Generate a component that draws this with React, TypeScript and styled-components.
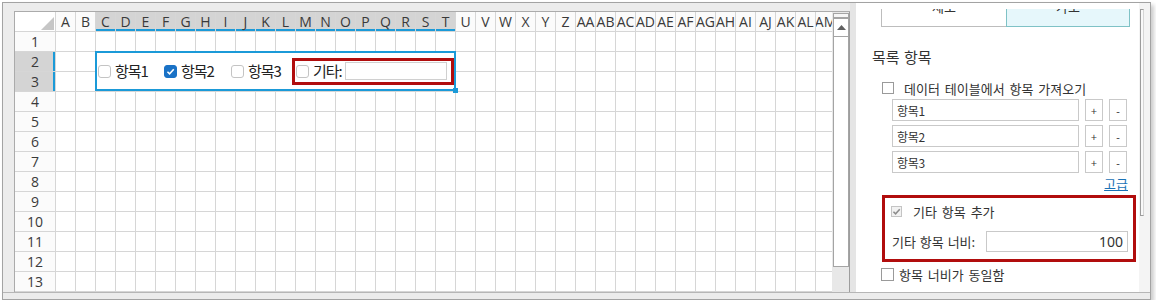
import React from 'react'
import styled, { createGlobalStyle } from 'styled-components'

const KR = `"Noto Sans CJK KR", "Noto Sans", sans-serif`
const LATIN = `"Open Sans", "Noto Sans CJK KR", sans-serif`
const GRID = '#d6d6d6'
const BLUE = '#1b9ad8'
const RED = '#b10d0d'

const GlobalStyle = createGlobalStyle`
  html, body {
    margin: 0;
    padding: 0;
    background: #fff;
  }
  body {
    font-family: ${LATIN};
  }
`

const COLUMNS = [
  ...'ABCDEFGHIJKLMNOPQRSTUVWXYZ'.split(''),
  ...'ABCDEFGHIJKLM'.split('').map(c => 'A' + c),
]
const ROWS = Array.from({ length: 13 }, (_, i) => i + 1)
const SEL_COLS = 'CDEFGHIJKLMNOPQRST'.split('')

// --- window frame ---
const Frame = styled.div`
  margin: 2px 0 0 2px;
  width: 1149px;
  height: 298px;
  box-sizing: border-box;
  border: 1px solid #a3a3a3;
  background: #ececec;
  box-shadow: 3px 3px 4px rgba(0, 0, 0, 0.2);
  display: flex;
  flex-direction: column;
`

const Main = styled.div`
  display: flex;
  height: 290px;
  box-sizing: border-box;
  border-bottom: 1px solid #b6b6b6;
`

const Footer = styled.div`
  height: 6px;
  background: #ececec;
`

// --- spreadsheet ---
const SheetPane = styled.div`
  width: 847px;
  box-sizing: border-box;
  padding: 8px 0 0 11px;
  background: #ececec;
`

const GridFrame = styled.div`
  display: flex;
  height: 281px;
  box-sizing: border-box;
  border-left: 1px solid #ababab;
  border-top: 1px solid #ababab;
`

const Viewport = styled.div`
  position: relative;
  width: 817px;
  overflow: hidden;
  background: #fff;
`

const Grid = styled.div`
  display: grid;
  grid-template-columns: 41px repeat(${COLUMNS.length}, 20px);
  grid-auto-rows: 20px;
  width: max-content;
`

const Cell = styled.div`
  box-sizing: border-box;
  border-right: 1px solid ${GRID};
  border-bottom: 1px solid ${GRID};
  background: #fff;
`

const Corner = styled(Cell)`
  display: flex;
  align-items: flex-end;
  justify-content: flex-end;
  padding: 0 1px 1px 0;
`

const ColHead = styled(Cell)<{ $sel?: boolean }>`
  display: flex;
  align-items: center;
  justify-content: center;
  overflow: hidden;
  white-space: nowrap;
  font-size: 14px;
  color: #3a3a3a;
  background: ${p => (p.$sel ? '#d4d4d4' : '#fbfbfb')};
  box-shadow: ${p => (p.$sel ? `inset 0 -2px 0 ${BLUE}` : 'none')};
`

const RowHead = styled(Cell)<{ $sel?: boolean }>`
  display: flex;
  align-items: center;
  justify-content: center;
  font-size: 14px;
  color: #3a3a3a;
  background: ${p => (p.$sel ? '#d4d4d4' : '#fbfbfb')};
  box-shadow: ${p => (p.$sel ? `inset -2px 0 0 ${BLUE}` : 'none')};
`

const VScroll = styled.div`
  width: 18px;
  box-sizing: border-box;
  border-right: 1px solid #9d9d9d;
  background: #e8e8e8;
  display: flex;
  flex-direction: column;
  padding: 1px 0 0 1px;
`

const Splitter = styled.div`
  width: 16px;
  height: 5px;
  box-sizing: border-box;
  border: 1px solid #a4a4a4;
  background: #f6f6f6;
`

const ArrowBtn = styled.div`
  width: 16px;
  height: 19px;
  box-sizing: border-box;
  border: 1px solid #a4a4a4;
  background: #fff;
  display: flex;
  align-items: center;
  justify-content: center;
`

const Thumb = styled.div`
  width: 16px;
  height: 231px;
  margin-top: -1px;
  box-sizing: border-box;
  border: 1px solid #a4a4a4;
  background: #fff;
`

// --- checkbox group control placed on the sheet ---
const Control = styled.div`
  position: absolute;
  left: 80px;
  top: 39px;
  width: 361px;
  height: 40px;
  box-sizing: border-box;
  border: 2px solid ${BLUE};
  background: #fff;
  display: flex;
  align-items: center;
  padding-left: 1px;
  font-family: ${KR};
  font-size: 15px;
  letter-spacing: -1px;
  color: #222;
`

const Handle = styled.div`
  position: absolute;
  right: -4px;
  bottom: -4px;
  width: 5px;
  height: 5px;
  background: ${BLUE};
`

const CheckItem = styled.div<{ $w: number }>`
  display: flex;
  align-items: center;
  width: ${p => p.$w}px;
  flex: none;
`

const SheetBox = styled.span<{ $on?: boolean }>`
  width: 13px;
  height: 13px;
  box-sizing: border-box;
  flex: none;
  border-radius: 3px;
  border: 1px solid ${p => (p.$on ? '#1a72c6' : '#c4c4c4')};
  background: ${p => (p.$on ? '#1a72c6' : '#fff')};
  display: flex;
  align-items: center;
  justify-content: center;
`

const ItemLabel = styled.span<{ $gap?: number }>`
  margin-left: ${p => p.$gap ?? 4}px;
  line-height: 18px;
`

const OtherBox = styled.div`
  width: 162px;
  height: 27px;
  box-sizing: border-box;
  border: 3px solid ${RED};
  display: flex;
  align-items: center;
  padding-left: 1px;
  flex: none;
`

const OtherInput = styled.div`
  margin-left: 3px;
  width: 102px;
  height: 18px;
  box-sizing: border-box;
  border: 1px solid #d0d0d0;
  background: #fff;
`

// --- property panel ---
const Gutter = styled.div`
  width: 6px;
  background: #e5e5e5;
`

const Panel = styled.div`
  width: 283px;
  background: #fff;
  display: flex;
  flex-direction: column;
  padding-top: 6px;
  box-sizing: border-box;
  overflow: hidden;
  font-family: ${KR};
  color: #333;
`

const PanelScroll = styled.div`
  width: 11px;
  background: #f4f4f4;
  padding: 6px 0 0 1px;
  box-sizing: border-box;
`

const PanelThumb = styled.div`
  width: 4px;
  height: 207px;
  box-sizing: border-box;
  border: 1px solid #9c9c9c;
  border-right-color: #d6d6d6;
  background: #f9f9f9;
`

const TabStrip = styled.div`
  display: flex;
  height: 18px;
  padding-left: 25px;
  overflow: hidden;
`

const Tab = styled.div<{ $active?: boolean; $w: number }>`
  width: ${p => p.$w}px;
  box-sizing: border-box;
  border: 1px solid ${p => (p.$active ? '#7fc2c6' : '#bdbdbd')};
  border-top: none;
  border-right: ${p => (p.$active ? '1px solid #7fc2c6' : 'none')};
  background: ${p => (p.$active ? '#e6f7fb' : '#fff')};
  font-size: 13px;
  line-height: 14px;
  text-align: center;
  color: #333;

  span {
    display: block;
    margin-top: -9px;
  }
`

const SectionTitle = styled.div`
  margin-top: 20px;
  padding-left: 16px;
  font-size: 15px;
  line-height: 20px;
  word-spacing: 1px;
  color: #333;
`

const OptionRow = styled.label<{ $indent: number; $gap: number; $top: number }>`
  display: flex;
  align-items: center;
  height: 18px;
  margin-top: ${p => p.$top}px;
  padding-left: ${p => p.$indent}px;
  gap: ${p => p.$gap}px;
  font-size: 13px;
  word-spacing: 2px;
`

const PanelBox = styled.span<{ $size?: number; $disabled?: boolean }>`
  width: ${p => p.$size ?? 12}px;
  height: ${p => p.$size ?? 12}px;
  box-sizing: border-box;
  flex: none;
  border: 1px solid ${p => (p.$disabled ? '#c4c4c4' : '#9a9a9a')};
  background: ${p => (p.$disabled ? '#f2f2f2' : '#fff')};
  display: flex;
  align-items: center;
  justify-content: center;
`

const ItemList = styled.div`
  display: flex;
  flex-direction: column;
  gap: 4px;
  margin-top: 2px;
  padding-left: 36px;
`

const ItemRow = styled.div`
  display: flex;
  gap: 6px;
  height: 22px;
`

const TextBox = styled.div<{ $w: number; $right?: boolean }>`
  width: ${p => p.$w}px;
  height: 100%;
  box-sizing: border-box;
  border: 1px solid #c9c9c9;
  background: #fff;
  display: flex;
  align-items: center;
  justify-content: ${p => (p.$right ? 'flex-end' : 'flex-start')};
  padding: 0 4px;
  font-size: 12px;
  letter-spacing: -0.3px;
  color: #333;
`

const SmallButton = styled.div`
  width: 18px;
  height: 100%;
  box-sizing: border-box;
  border: 1px solid #c9c9c9;
  background: #fff;
  display: flex;
  align-items: center;
  justify-content: center;
  font-family: ${LATIN};
  font-size: 11px;
  color: #333;
`

const LinkText = styled.a`
  align-self: flex-end;
  margin: 3px 11px 0 0;
  font-size: 13px;
  line-height: 16px;
  color: #1a72b6;
  text-decoration: underline;
`

const Highlight = styled.div`
  margin: 3px 0 0 26px;
  width: 254px;
  height: 67px;
  box-sizing: border-box;
  border: 3px solid ${RED};
  padding: 4px 5px 0 6px;
  display: flex;
  flex-direction: column;
`

const WidthRow = styled.div`
  display: flex;
  align-items: center;
  justify-content: space-between;
  height: 21px;
  margin-top: 11px;
  padding-left: 1px;
  font-size: 13px;
  word-spacing: 1px;
`

const NumberValue = styled.span`
  font-family: "Noto Sans", sans-serif;
  font-size: 14px;
  letter-spacing: 0;
`

const CheckMark = ({ color, size = 9 }: { color: string; size?: number }) => (
  <svg width={size} height={size} viewBox="0 0 10 10">
    <path d="M1.6 5.2 L4 7.6 L8.6 2.4" fill="none" stroke={color} strokeWidth="1.7" />
  </svg>
)

export default function App() {
  return (
    <>
      <GlobalStyle />
      <Frame>
        <Main>
          <SheetPane>
            <GridFrame>
              <Viewport>
                <Grid>
                  <Corner>
                    <svg width="13" height="13" viewBox="0 0 13 13">
                      <polygon points="13,0 13,13 0,13" fill="#c6c6c6" />
                    </svg>
                  </Corner>
                  {COLUMNS.map(c => (
                    <ColHead key={c} $sel={SEL_COLS.includes(c)}>
                      {c}
                    </ColHead>
                  ))}
                  {ROWS.map(r => (
                    <React.Fragment key={r}>
                      <RowHead $sel={r === 2 || r === 3}>{r}</RowHead>
                      {COLUMNS.map(c => (
                        <Cell key={c} />
                      ))}
                    </React.Fragment>
                  ))}
                </Grid>

                <Control>
                  <CheckItem $w={66}>
                    <SheetBox />
                    <ItemLabel>항목1</ItemLabel>
                  </CheckItem>
                  <CheckItem $w={67}>
                    <SheetBox $on>
                      <CheckMark color="#fff" />
                    </SheetBox>
                    <ItemLabel>항목2</ItemLabel>
                  </CheckItem>
                  <CheckItem $w={61}>
                    <SheetBox />
                    <ItemLabel>항목3</ItemLabel>
                  </CheckItem>
                  <OtherBox>
                    <SheetBox />
                    <ItemLabel>기타:</ItemLabel>
                    <OtherInput />
                  </OtherBox>
                  <Handle />
                </Control>
              </Viewport>

              <VScroll>
                <Splitter />
                <ArrowBtn>
                  <svg width="9" height="5" viewBox="0 0 9 5">
                    <polygon points="4.5,0 9,5 0,5" fill="#606060" />
                  </svg>
                </ArrowBtn>
                <Thumb />
              </VScroll>
            </GridFrame>
          </SheetPane>

          <Gutter />

          <Panel>
            <TabStrip>
              <Tab $w={125}>
                <span>세로</span>
              </Tab>
              <Tab $w={124} $active>
                <span>가로</span>
              </Tab>
            </TabStrip>

            <SectionTitle>목록 항목</SectionTitle>

            <OptionRow $indent={26} $gap={10} $top={12}>
              <PanelBox />
              데이터 테이블에서 항목 가져오기
            </OptionRow>

            <ItemList>
              {['항목1', '항목2', '항목3'].map(item => (
                <ItemRow key={item}>
                  <TextBox $w={187}>{item}</TextBox>
                  <SmallButton>+</SmallButton>
                  <SmallButton>-</SmallButton>
                </ItemRow>
              ))}
            </ItemList>

            <LinkText>고급</LinkText>

            <Highlight>
              <OptionRow $indent={0} $gap={11} $top={0}>
                <PanelBox $size={11} $disabled>
                  <CheckMark color="#8c8c8c" size={9} />
                </PanelBox>
                기타 항목 추가
              </OptionRow>
              <WidthRow>
                기타 항목 너비:
                <TextBox $w={142} $right>
                  <NumberValue>100</NumberValue>
                </TextBox>
              </WidthRow>
            </Highlight>

            <OptionRow $indent={25} $gap={5} $top={3}>
              <PanelBox $size={13} />
              항목 너비가 동일함
            </OptionRow>
          </Panel>

          <PanelScroll>
            <PanelThumb />
          </PanelScroll>
        </Main>
        <Footer />
      </Frame>
    </>
  )
}
